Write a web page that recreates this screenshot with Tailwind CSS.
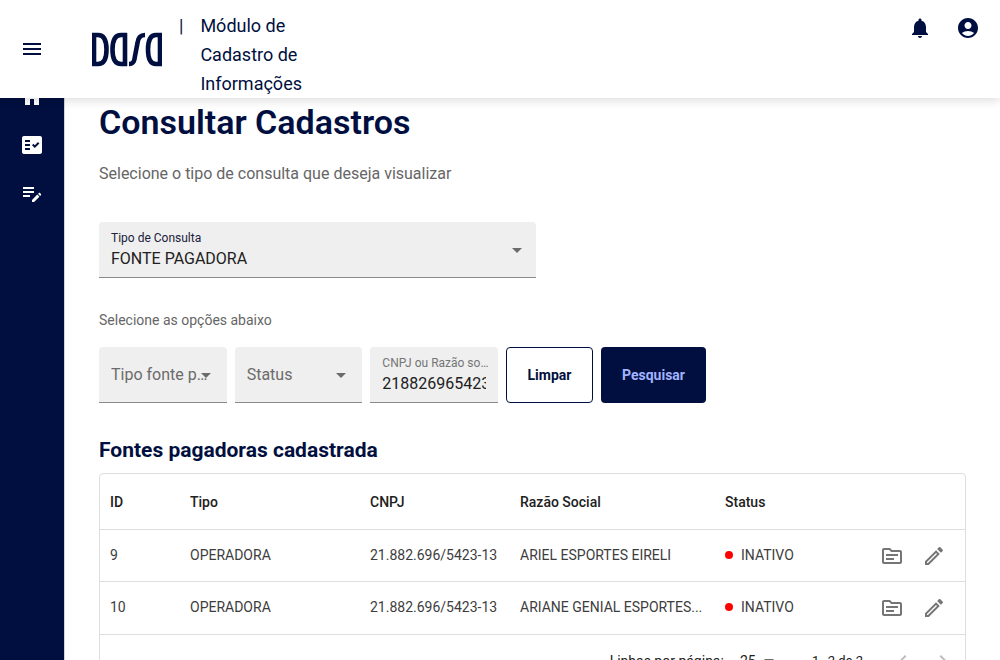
<!DOCTYPE html>
<html lang="pt-BR">
<head>
<meta charset="utf-8">
<meta name="viewport" content="width=device-width, initial-scale=1">
<title>Consultar Cadastros</title>
<script src="https://cdn.jsdelivr.net/npm/@tailwindcss/browser@4"></script>
</head>
<body class="bg-white font-['Roboto','Liberation_Sans',sans-serif] text-[#212121]">
<div class="flex h-screen flex-col overflow-hidden">
  <header class="relative z-10 flex items-start bg-white text-[#000f40] shadow-[0_2px_10px_rgba(0,0,0,0.15)]">
    <button type="button" aria-label="Abrir menu" class="ml-5 self-center">
      <svg class="size-6" viewBox="0 0 24 24" fill="currentColor"><path d="M3 18h18v-2H3v2zm0-5h18v-2H3v2zm0-7v2h18V6H3z"/></svg>
    </button>
    <a href="#" aria-label="Dasa" class="ml-12 self-center">
      <svg class="h-[35px] w-[70px]" viewBox="0 0 70 35" fill="none" stroke="currentColor" stroke-width="4.600">
        <path d="M2 1V34M0 3H6C12.500 3 14.500 9 14.500 17.500S12.500 32 6 32H0"/>
        <path d="M33 1V34M35 3H29C22.500 3 20.500 9 20.500 17.500S22.500 32 29 32H35"/>
        <path d="M37 32C42 32 42.500 28 43 24L45.500 11C46 6 48 3 53 3"/>
        <path d="M68 1V34M70 3H64C58 3 56 9 56 17.500S58 32 64 32H70"/>
      </svg>
    </a>
    <p class="mt-[11px] ml-[17px] flex w-36 gap-[17px] text-lg leading-[29px]"><span>|</span><span>Módulo de Cadastro de Informações</span></p>
    <div class="mt-4 mr-5 ml-auto flex gap-6">
      <button type="button" aria-label="Notificações"><svg class="size-6" viewBox="0 0 24 24" fill="currentColor"><path d="M12 22c1.100 0 2-.900 2-2h-4c0 1.100.900 2 2 2zm6-6v-5c0-3.070-1.630-5.640-4.500-6.320V4c0-.830-.670-1.500-1.500-1.500s-1.500.670-1.500 1.500v.680C7.640 5.360 6 7.920 6 11v5l-2 2v1h16v-1l-2-2z"/></svg></button>
      <button type="button" aria-label="Conta"><svg class="size-6" viewBox="0 0 24 24" fill="currentColor"><path d="M12 2C6.480 2 2 6.480 2 12s4.480 10 10 10 10-4.480 10-10S17.520 2 12 2zm0 4c1.930 0 3.500 1.570 3.500 3.500S13.930 13 12 13s-3.500-1.570-3.500-3.500S10.070 6 12 6zm0 14c-2.030 0-4.430-.820-6.140-2.880C7.550 15.800 9.680 15 12 15s4.450.800 6.140 2.120C16.430 19.180 14.030 20 12 20z"/></svg></button>
    </div>
  </header>

  <div class="flex min-h-0 flex-1">
    <nav class="w-[65px] shrink-0 border-r border-gray-300 bg-[#000f40] text-white">
      <div class="-mt-[13px] flex flex-col items-center gap-6">
        <a href="#" aria-label="Início"><svg class="size-6" viewBox="0 0 24 24" fill="currentColor"><path d="M10 20v-6h4v6h5v-8h3L12 3 2 12h3v8z"/></svg></a>
        <a href="#" aria-label="Consultas"><svg class="size-6" viewBox="0 0 24 24" fill="currentColor"><path fill-rule="evenodd" d="M20 3H4c-1.100 0-2 .900-2 2v14c0 1.100.900 2 2 2h16c1.100 0 2-.900 2-2V5c0-1.100-.900-2-2-2zM10 17H5v-2h5v2zm0-4H5v-2h5v2zm0-4H5V7h5v2zm4.820 6L12 12.160l1.410-1.410 1.410 1.420L17.990 9l1.420 1.420L14.820 15z"/></svg></a>
        <a href="#" aria-label="Cadastros"><svg class="size-6" viewBox="0 0 24 24" fill="currentColor"><path d="M3 10h11v2H3v-2zm0-2h11V6H3v2zm0 8h7v-2H3v2zm15.010-3.130.710-.710c.390-.390 1.020-.390 1.410 0l.710.710c.390.390.390 1.020 0 1.410l-.710.710-2.120-2.120zm-.710.710-5.300 5.300V21h2.120l5.300-5.300-2.120-2.120z"/></svg></a>
      </div>
    </nav>

    <main class="min-w-0 flex-1 overflow-y-auto pr-[34px] pl-[34px] [scrollbar-width:none]">
      <h1 class="mt-1 text-[34px] leading-10 font-semibold text-[#000f40]">Consultar Cadastros</h1>
      <p class="mt-5 text-base leading-6 text-[#666]">Selecione o tipo de consulta que deseja visualizar</p>

      <form>
        <div class="relative mt-9 w-[calc(50%+3px)]">
          <label for="consulta" class="absolute top-2 left-3 text-xs leading-4 text-[#21213a]">Tipo de Consulta</label>
          <select id="consulta" class="h-14 w-full appearance-none rounded-t border-b border-[#8a8a8a] bg-[#efefef] px-3 pt-[18px] text-base text-[#212121]"><option>FONTE PAGADORA</option></select>
          <svg class="pointer-events-none absolute top-[26px] right-3.5 h-[5px] w-2.5" viewBox="0 0 10 5" fill="#6b6b6b"><path d="M0 0h10L5 5z"/></svg>
        </div>

        <p class="mt-8 text-sm leading-5 text-[#666]">Selecione as opções abaixo</p>

        <div class="mt-[17px] flex gap-2">
          <div class="grid w-[399px] grid-cols-3 gap-2">
            <div class="relative">
              <select aria-label="Tipo fonte pagadora" class="h-14 w-full appearance-none truncate rounded-t border-b border-[#8a8a8a] bg-[#efefef] pr-4 pl-3 text-base text-[#6b6b6b]"><option>Tipo fonte pagadora</option></select>
              <svg class="pointer-events-none absolute top-[26px] right-4 h-[5px] w-2.5" viewBox="0 0 10 5" fill="#6b6b6b"><path d="M0 0h10L5 5z"/></svg>
            </div>
            <div class="relative">
              <select aria-label="Status" class="h-14 w-full appearance-none truncate rounded-t border-b border-[#8a8a8a] bg-[#efefef] pr-4 pl-3 text-base text-[#6b6b6b]"><option>Status</option></select>
              <svg class="pointer-events-none absolute top-[26px] right-4 h-[5px] w-2.5" viewBox="0 0 10 5" fill="#6b6b6b"><path d="M0 0h10L5 5z"/></svg>
            </div>
            <div class="h-14 rounded-t border-b border-[#8a8a8a] bg-[#efefef] px-3 pt-2">
              <label for="cnpj" class="-mr-2 block truncate text-xs leading-4 text-[#757575]">CNPJ ou Razão social</label>
              <input id="cnpj" type="text" value="21882696542313" class="mt-px block h-6 w-full bg-transparent text-base text-[#212121] outline-none">
            </div>
          </div>
          <button type="reset" class="h-14 w-[87px] rounded border border-[#000f40] text-sm font-bold text-[#000f40]">Limpar</button>
          <button type="button" class="h-14 w-[105px] rounded bg-[#000f40] text-sm font-bold text-[#a3b3ff]">Pesquisar</button>
        </div>
      </form>

      <h2 class="mt-8 text-[21px] leading-[30px] font-bold text-[#000f40]">Fontes pagadoras cadastrada</h2>

      <div class="mt-2 mb-6 rounded border border-[#dedede]">
        <table class="w-full table-fixed text-left text-sm">
          <colgroup><col class="w-20"><col class="w-[180px]"><col class="w-[150px]"><col class="w-[205px]"><col><col class="w-[105px]"></colgroup>
          <thead>
            <tr class="h-[55px] border-b border-[#dedede]">
              <th class="px-2.5 pt-px font-medium">ID</th><th class="px-2.5 pt-px font-medium">Tipo</th><th class="px-2.5 pt-px font-medium">CNPJ</th><th class="px-2.5 pt-px font-medium">Razão Social</th><th class="px-2.5 pt-px font-medium">Status</th><th aria-label="Ações"></th>
            </tr>
          </thead>
          <tbody class="text-[#3d3d3d]">
            <tr class="h-[52px] border-b border-[#dedede]">
              <td class="px-2.5">9</td><td class="px-2.5">OPERADORA</td><td class="px-2.5">21.882.696/5423-13</td><td class="truncate px-2.5">ARIEL ESPORTES EIRELI</td>
              <td class="px-2.5"><span class="flex items-center gap-2"><span class="size-2 rounded-full bg-[#ff0000]"></span>INATIVO</span></td>
              <td class="pt-0.5"><div class="flex gap-[18px] pl-5 text-[#757575]">
                <button type="button" aria-label="Detalhes de ARIEL ESPORTES EIRELI"><svg class="size-6" viewBox="0 0 24 24" fill="currentColor"><path d="M20 6h-8l-2-2H4c-1.100 0-1.990.900-1.990 2L2 18c0 1.100.900 2 2 2h16c1.100 0 2-.900 2-2V8c0-1.100-.900-2-2-2zm0 12H4V6h5.170l2 2H20v10zm-2-6H6v-2h12v2zm-4 4H6v-2h8v2z"/></svg></button>
                <button type="button" aria-label="Editar ARIEL ESPORTES EIRELI"><svg class="size-6" viewBox="0 0 24 24" fill="currentColor"><path d="M14.060 9.020l.920.920L5.920 19H5v-.920l9.060-9.060M17.660 3c-.250 0-.510.100-.700.290l-1.830 1.830 3.750 3.750 1.830-1.830c.390-.390.390-1.020 0-1.410l-2.340-2.340c-.200-.200-.450-.290-.710-.290zm-3.600 3.190L3 17.250V21h3.750L17.810 9.940l-3.750-3.750z"/></svg></button>
              </div></td>
            </tr>
            <tr class="h-[53px] border-b border-[#dedede]">
              <td class="px-2.5 pb-0.5">10</td><td class="px-2.5 pb-0.5">OPERADORA</td><td class="px-2.5 pb-0.5">21.882.696/5423-13</td><td class="px-2.5 pb-0.5 whitespace-nowrap">ARIANE GENIAL ESPORTES...</td>
              <td class="px-2.5 pb-0.5"><span class="flex items-center gap-2"><span class="size-2 rounded-full bg-[#ff0000]"></span>INATIVO</span></td>
              <td><div class="flex gap-[18px] pl-5 text-[#757575]">
                <button type="button" aria-label="Detalhes de ARIANE GENIAL ESPORTES"><svg class="size-6" viewBox="0 0 24 24" fill="currentColor"><path d="M20 6h-8l-2-2H4c-1.100 0-1.990.900-1.990 2L2 18c0 1.100.900 2 2 2h16c1.100 0 2-.900 2-2V8c0-1.100-.900-2-2-2zm0 12H4V6h5.170l2 2H20v10zm-2-6H6v-2h12v2zm-4 4H6v-2h8v2z"/></svg></button>
                <button type="button" aria-label="Editar ARIANE GENIAL ESPORTES"><svg class="size-6" viewBox="0 0 24 24" fill="currentColor"><path d="M14.060 9.020l.920.920L5.920 19H5v-.920l9.060-9.060M17.660 3c-.250 0-.510.100-.700.290l-1.830 1.830 3.750 3.750 1.830-1.830c.390-.390.390-1.020 0-1.410l-2.340-2.340c-.200-.200-.450-.290-.710-.290zm-3.600 3.190L3 17.250V21h3.750L17.810 9.940l-3.750-3.750z"/></svg></button>
              </div></td>
            </tr>
          </tbody>
        </table>
        <div class="flex h-[52px] items-center justify-end pr-2.5 text-[13px]">
          <label for="linhas" class="text-sm">Linhas por página:</label>
          <div class="relative ml-4">
            <select id="linhas" class="h-6 w-9 appearance-none text-sm"><option>25</option></select>
            <svg class="pointer-events-none absolute top-2.5 right-0.5 h-[5px] w-2.5" viewBox="0 0 10 5" fill="#6b6b6b"><path d="M0 0h10L5 5z"/></svg>
          </div>
          <span class="ml-9">1–2 de 2</span>
          <button type="button" disabled aria-label="Página anterior" class="ml-7 text-[#bdbdbd]"><svg class="size-6" viewBox="0 0 24 24" fill="currentColor"><path d="M15.410 7.410 14 6l-6 6 6 6 1.410-1.410L10.830 12z"/></svg></button>
          <button type="button" disabled aria-label="Próxima página" class="ml-4 text-[#bdbdbd]"><svg class="size-6" viewBox="0 0 24 24" fill="currentColor"><path d="M10 6 8.590 7.410 13.170 12l-4.580 4.590L10 18l6-6z"/></svg></button>
        </div>
      </div>
    </main>
  </div>
</div>
</body>
</html>
